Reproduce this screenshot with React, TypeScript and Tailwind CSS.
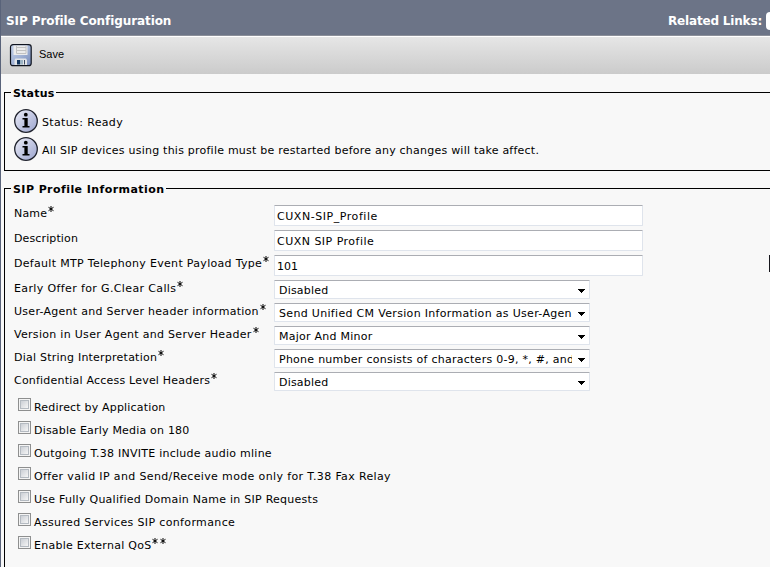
import React from 'react';

function Floppy() {
  return (
    <svg width="23" height="23" viewBox="0 0 23 23" className="block">
      <defs>
        <linearGradient id="disk" x1="0" y1="0" x2="1" y2="1">
          <stop offset="0" stopColor="#c6d3ea" />
          <stop offset="0.5" stopColor="#a3b4d6" />
          <stop offset="1" stopColor="#7488b6" />
        </linearGradient>
      </defs>
      <rect x="1.500" y="0.700" width="20.700" height="21" rx="2.500" fill="url(#disk)" stroke="#10141e" strokeWidth="1.200" />
      <path d="M4.500 1.500h14v9.500h-14z" fill="#ececec" />
      <path d="M7.500 2v7.500h9.500V2M8 3.500h9M8 6.500h9" stroke="#c2c2c2" fill="none" />
      <path d="M6.500 14.500h10.500l1 1.500v5H5.500V16z" fill="#e3e5e8" />
      <rect x="8" y="16" width="3" height="4.500" fill="#12355f" />
      <rect x="11" y="16" width="3" height="4.500" fill="#9db4c4" />
      <path d="M15.500 16v4.500" stroke="#3c4a60" />
    </svg>
  );
}

function Info() {
  return (
    <svg width="25" height="25" viewBox="0 0 25 25" className="block shrink-0">
      <defs>
        <linearGradient id="ball" x1="0" y1="0" x2="1" y2="1">
          <stop offset="0.1" stopColor="#e4e6f4" />
          <stop offset="0.9" stopColor="#a3abd2" />
        </linearGradient>
      </defs>
      <circle cx="12" cy="12" r="11.300" fill="url(#ball)" stroke="#20232e" strokeWidth="1.300" />
      <circle cx="11.800" cy="5.700" r="1.900" fill="#000" />
      <path d="M8.500 9h5.200v8h1.800v1.500H8.500v-1.500h1.900v-6.500H8.500z" fill="#000" />
    </svg>
  );
}

function Star() {
  return (
    <svg width="7" height="8" viewBox="0 0 7 8" className="-mt-[2px] ml-px block shrink-0">
      <path d="M3 1v6M0.500 2.300l5 3.400M5.500 2.300l-5 3.400" stroke="#000" strokeWidth="1" />
    </svg>
  );
}

function Label({ text, stars = 0, cls }: { text: string; stars?: number; cls: string }) {
  return (
    <div className="flex h-[14px] items-start whitespace-nowrap leading-[14px]">
      <span className={cls}>{text}</span>
      {Array.from({ length: stars }, (_, i) => (
        <Star key={i} />
      ))}
    </div>
  );
}

const fields = [
  { label: 'Name', star: 1, value: 'CUXN-SIP_Profile', lc: 'tracking-[0.2px]', vc: 'tracking-[0.55px]' },
  { label: 'Description', star: 0, value: 'CUXN SIP Profile', lc: 'tracking-[0.12px]', vc: 'tracking-[0.48px]' },
  { label: 'Default MTP Telephony Event Payload Type', star: 1, value: '101', lc: 'tracking-[0.31px]', vc: '' },
];

const selects = [
  { label: 'Early Offer for G.Clear Calls', value: 'Disabled', lc: 'tracking-[0.37px]', vc: 'tracking-[0.2px]' },
  { label: 'User-Agent and Server header information', value: 'Send Unified CM Version Information as User-Agen', lc: 'tracking-[0.28px]', vc: 'tracking-[0.32px]' },
  { label: 'Version in User Agent and Server Header', value: 'Major And Minor', lc: 'tracking-[0.3px]', vc: 'tracking-[0.25px]' },
  { label: 'Dial String Interpretation', value: 'Phone number consists of characters 0-9, *, #, and', lc: 'tracking-[0.23px]', vc: 'tracking-[0.26px]' },
  { label: 'Confidential Access Level Headers', value: 'Disabled', lc: 'tracking-[0.21px]', vc: 'tracking-[0.2px]' },
];

const checks = [
  { label: 'Redirect by Application', stars: 0, c: 'tracking-[0.18px]' },
  { label: 'Disable Early Media on 180', stars: 0, c: 'tracking-[0.2px]' },
  { label: 'Outgoing T.38 INVITE include audio mline', stars: 0, c: 'tracking-[0.25px]' },
  { label: 'Offer valid IP and Send/Receive mode only for T.38 Fax Relay', stars: 0, c: 'tracking-[0.36px]' },
  { label: 'Use Fully Qualified Domain Name in SIP Requests', stars: 0, c: 'tracking-[0.26px]' },
  { label: 'Assured Services SIP conformance', stars: 0, c: 'tracking-[0.36px]' },
  { label: 'Enable External QoS', stars: 2, c: 'tracking-[0.26px]' },
];

export default function App() {
  return (
    <div className="relative flex h-[567px] w-[770px] flex-col overflow-hidden border-l border-[#59637a] bg-[#f8f8f8] font-['Verdana','DejaVu_Sans',sans-serif] text-[11px] text-black">
      <header className="flex h-[36px] shrink-0 items-center justify-between border-b border-[#8b8f99] bg-[#6c7487] pt-[6px] pl-[5px] text-[12px] font-bold whitespace-nowrap text-white">
        <h1 className="tracking-[-0.09px]">SIP Profile Configuration</h1>
        <div className="flex items-center">
          <span className="tracking-[-0.18px]">Related Links:</span>
          <div className="ml-[4px] h-[18px] w-[4px] rounded-l-sm bg-white" />
        </div>
      </header>
      <div className="flex h-[38px] shrink-0 items-start border-t border-white bg-linear-to-b from-[#e6e6e6] to-[#cbcbcb] pl-[8px]">
        <div className="pt-[7px]">
          <Floppy />
        </div>
        <span className="mt-[9px] ml-[7px] font-['Liberation_Sans',sans-serif] leading-[16px]">Save</span>
      </div>

      <section className="mt-[18px] ml-[3px] h-[79px] shrink-0 border-y border-l border-black">
        <h2 className="-mt-[8px] ml-[6px] h-[16px] w-fit bg-[#f8f8f8] px-[2px] pt-px font-bold tracking-[0.2px] leading-[16px]">Status</h2>
        <div className="mt-[8px] ml-[9px] flex h-[28px] items-start">
          <Info />
          <span className="mt-[7px] ml-[3px] leading-[14px] tracking-[0.36px]">Status: Ready</span>
        </div>
        <div className="ml-[9px] flex h-[28px] items-start">
          <Info />
          <span className="mt-[7px] ml-[3px] leading-[14px] tracking-[0.23px]">
            All SIP devices using this profile must be restarted before any changes will take affect.
          </span>
        </div>
      </section>

      <section className="mt-[17px] ml-[3px] flex h-[390px] shrink-0 flex-col border-t border-l border-black">
        <h2 className="-mt-[8px] ml-[6px] h-[16px] w-fit shrink-0 bg-[#f8f8f8] px-[2px] pt-px font-bold tracking-[0.43px] leading-[16px]">
          SIP Profile Information
        </h2>
        <div className="mt-[8px] ml-[9px]">
          {fields.map((f) => (
            <div key={f.label} className="flex h-[25px]">
              <div className="w-[260px] pt-[2px]">
                <Label text={f.label} stars={f.star} cls={f.lc} />
              </div>
              <div className="h-[21px] w-[369px] rounded-[1px] border border-[#dfe4ec] border-t-[#abadb3] bg-white pl-[2px] leading-[21px] whitespace-nowrap">
                <span className={f.vc}>{f.value}</span>
              </div>
            </div>
          ))}
          {selects.map((s) => (
            <div key={s.label} className="flex h-[23px]">
              <div className="w-[260px] pt-[2px]">
                <Label text={s.label} stars={1} cls={s.lc} />
              </div>
              <div className="flex h-[19px] w-[316px] items-center rounded-[1px] border border-[#dfe4ec] border-t-[#abadb3] bg-white pl-[4px]">
                <div className="h-[17px] w-[293px] overflow-hidden leading-[19px] whitespace-nowrap">
                  <span className={s.vc}>{s.value}</span>
                </div>
                <svg width="7" height="4" viewBox="0 0 7 4" shapeRendering="crispEdges" className="mt-[3px] ml-[6px]">
                  <path d="M0 0h7v1H6v1H5v1H4v1H3V3H2V2H1V1H0z" fill="#000" />
                </svg>
              </div>
            </div>
          ))}
          <div className="pt-[3px] pl-[4px]">
            {checks.map((c) => (
              <div key={c.label} className="flex h-[23px]">
                <div className="h-[13px] w-[13px] border border-[#8e8f8f] bg-[#f4f4f4] p-px">
                  <div className="h-full w-full border border-[#b4bac1] bg-linear-to-br from-[#cbcfd5] to-[#f6f6f6]" />
                </div>
                <div className="ml-[3px] pt-[3px]">
                  <Label text={c.label} stars={c.stars} cls={c.c} />
                </div>
              </div>
            ))}
          </div>
        </div>
      </section>
      <div className="absolute top-[255px] right-0 h-[17px] w-px bg-[#16161c]" />
    </div>
  );
}
